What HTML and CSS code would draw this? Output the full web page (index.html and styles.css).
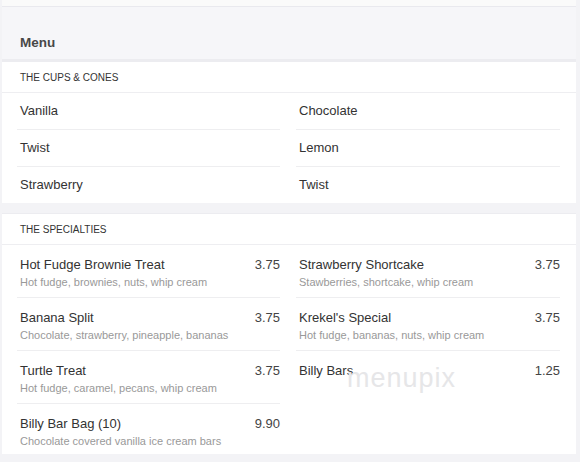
FILE: index.html
```html
<!DOCTYPE html>
<html>
<head>
<meta charset="utf-8">
<link rel="stylesheet" href="styles.css">
</head>
<body>
<div class="page">
  <div class="header"><h1 class="title">Menu</h1></div>
  <section class="section">
    <div class="section-head">THE CUPS &amp; CONES</div>
    <div class="cols">
      <div class="col">
        <div class="simple">Vanilla</div>
        <div class="simple">Twist</div>
        <div class="simple last">Strawberry</div>
      </div>
      <div class="col">
        <div class="simple">Chocolate</div>
        <div class="simple">Lemon</div>
        <div class="simple last">Twist</div>
      </div>
    </div>
  </section>
  <section class="section">
    <div class="section-head">THE SPECIALTIES</div>
    <div class="cols">
      <div class="col">
        <div class="item">
          <div class="line"><span class="name">Hot Fudge Brownie Treat</span><span class="price">3.75</span></div>
          <div class="desc">Hot fudge, brownies, nuts, whip cream</div>
        </div>
        <div class="item">
          <div class="line"><span class="name">Banana Split</span><span class="price">3.75</span></div>
          <div class="desc">Chocolate, strawberry, pineapple, bananas</div>
        </div>
        <div class="item">
          <div class="line"><span class="name">Turtle Treat</span><span class="price">3.75</span></div>
          <div class="desc">Hot fudge, caramel, pecans, whip cream</div>
        </div>
        <div class="item last">
          <div class="line"><span class="name">Billy Bar Bag (10)</span><span class="price">9.90</span></div>
          <div class="desc">Chocolate covered vanilla ice cream bars</div>
        </div>
      </div>
      <div class="col">
        <div class="item">
          <div class="line"><span class="name">Strawberry Shortcake</span><span class="price">3.75</span></div>
          <div class="desc">Stawberries, shortcake, whip cream</div>
        </div>
        <div class="item">
          <div class="line"><span class="name">Krekel's Special</span><span class="price">3.75</span></div>
          <div class="desc">Hot fudge, bananas, nuts, whip cream</div>
        </div>
        <div class="item last">
          <div class="line"><span class="name">Billy Bars</span><span class="price">1.25</span></div>
        </div>
      </div>
    </div>
  </section>
  <div class="watermark">menupix</div>
</div>
</body>
</html>
```

FILE: styles.css
```css
html, body {
  margin: 0;
  padding: 0;
  background: #f3f3f6;
}
body {
  font-family: "Liberation Sans", Arial, sans-serif;
  color: #333;
}
.page {
  position: relative;
  margin: 0 4px 0 2px;
  padding-top: 6px;
  background: linear-gradient(#fafafa 0, #fafafa 6px, transparent 6px);
}
.header {
  background: #f6f6f9;
  border-top: 1px solid #e9e9ee;
  border-bottom: 2px solid #ececf0;
  height: 55px;
  box-sizing: border-box;
  padding: 28px 0 0 18px;
}
.title {
  margin: 0;
  font-size: 13.5px;
  font-weight: bold;
  color: #484848;
  line-height: 16px;
}
.section {
  background: #fff;
  border-top: 1px solid #ececf0;
  margin-bottom: 10px;
}
.section-head {
  font-size: 10px;
  color: #333;
  height: 31px;
  line-height: 31px;
  padding-left: 18px;
  border-bottom: 1px solid #eeeef1;
  box-sizing: border-box;
}
.cols {
  display: grid;
  grid-template-columns: 263px 264px;
  column-gap: 16px;
  padding-left: 15px;
}
.simple {
  height: 36px;
  line-height: 36px;
  font-size: 13px;
  padding-left: 3px;
  border-bottom: 1px solid #eeeef0;
}
.simple.last {
  border-bottom: none;
  height: 36px;
}
.item {
  border-bottom: 1px solid #eeeef0;
  padding: 12px 0 0 3px;
  box-sizing: border-box;
  height: 53px;
}
.item.last {
  border-bottom: none;
  height: 50px;
}
.line {
  display: flex;
  justify-content: space-between;
  font-size: 13px;
  line-height: 16px;
}
.price {
  color: #444;
}
.desc {
  font-size: 11px;
  color: #999;
  line-height: 16px;
  margin-top: 1px;
}
.watermark {
  position: absolute;
  left: 345px;
  top: 363px;
  font-size: 27px;
  color: #e6e6e8;
  letter-spacing: 1px;
  font-family: "Liberation Sans", Arial, sans-serif;
}
```
